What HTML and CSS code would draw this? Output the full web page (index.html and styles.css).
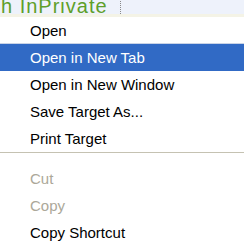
FILE: index.html
```html
<!DOCTYPE html>
<html lang="en">
<head>
  <meta charset="UTF-8" />
  <title>Link context menu</title>
  <link rel="stylesheet" href="styles.css">
</head>
<body>

<div class="tab-strip">
  <span class="tab-label">h InPrivate</span>
</div>

<ul class="menu">
  <li class="item">Open</li>
  <li class="item active">Open in New Tab</li>
  <li class="item">Open in New Window</li>
  <li class="item">Save Target As...</li>
  <li class="item">Print Target</li>
  <li class="separator"></li>
  <li class="item disabled">Cut</li>
  <li class="item disabled">Copy</li>
  <li class="item">Copy Shortcut</li>
</ul>

</body>
</html>
```

FILE: styles.css
```css
html, body {
  margin: 0;
  padding: 0;
  background: #fff;
  overflow: hidden;
}
body {
  font-family: 'Liberation Sans', Arial, sans-serif;
  color: #000;
}
.tab-strip {
  height: 14px;
  background: #eef2fb;
  border-bottom: 3px solid #f4f3e6;
  overflow: hidden;
  display: flex;
}
.tab-label {
  display: block;
  margin-top: -6px;
  padding: 0 12px 0 1px;
  font-size: 20px;
  line-height: 24px;
  letter-spacing: 1px;
  color: #5e9f2a;
  white-space: nowrap;
  border-right: 1px dotted #888;
}
.menu {
  list-style: none;
  margin: 0;
  padding: 0;
}
.item {
  height: 27px;
  line-height: 28px;
  padding-left: 30px;
  font-size: 15px;
  white-space: nowrap;
}
.item.active {
  background: #316ac5;
  color: #fff;
  border-top: 1px solid #c9d3e6;
  margin-top: -1px;
}
.item.disabled {
  color: #aca899;
}
.separator {
  height: 1px;
  background: #c5c2b2;
  margin: 0 0 12px;
}
```
